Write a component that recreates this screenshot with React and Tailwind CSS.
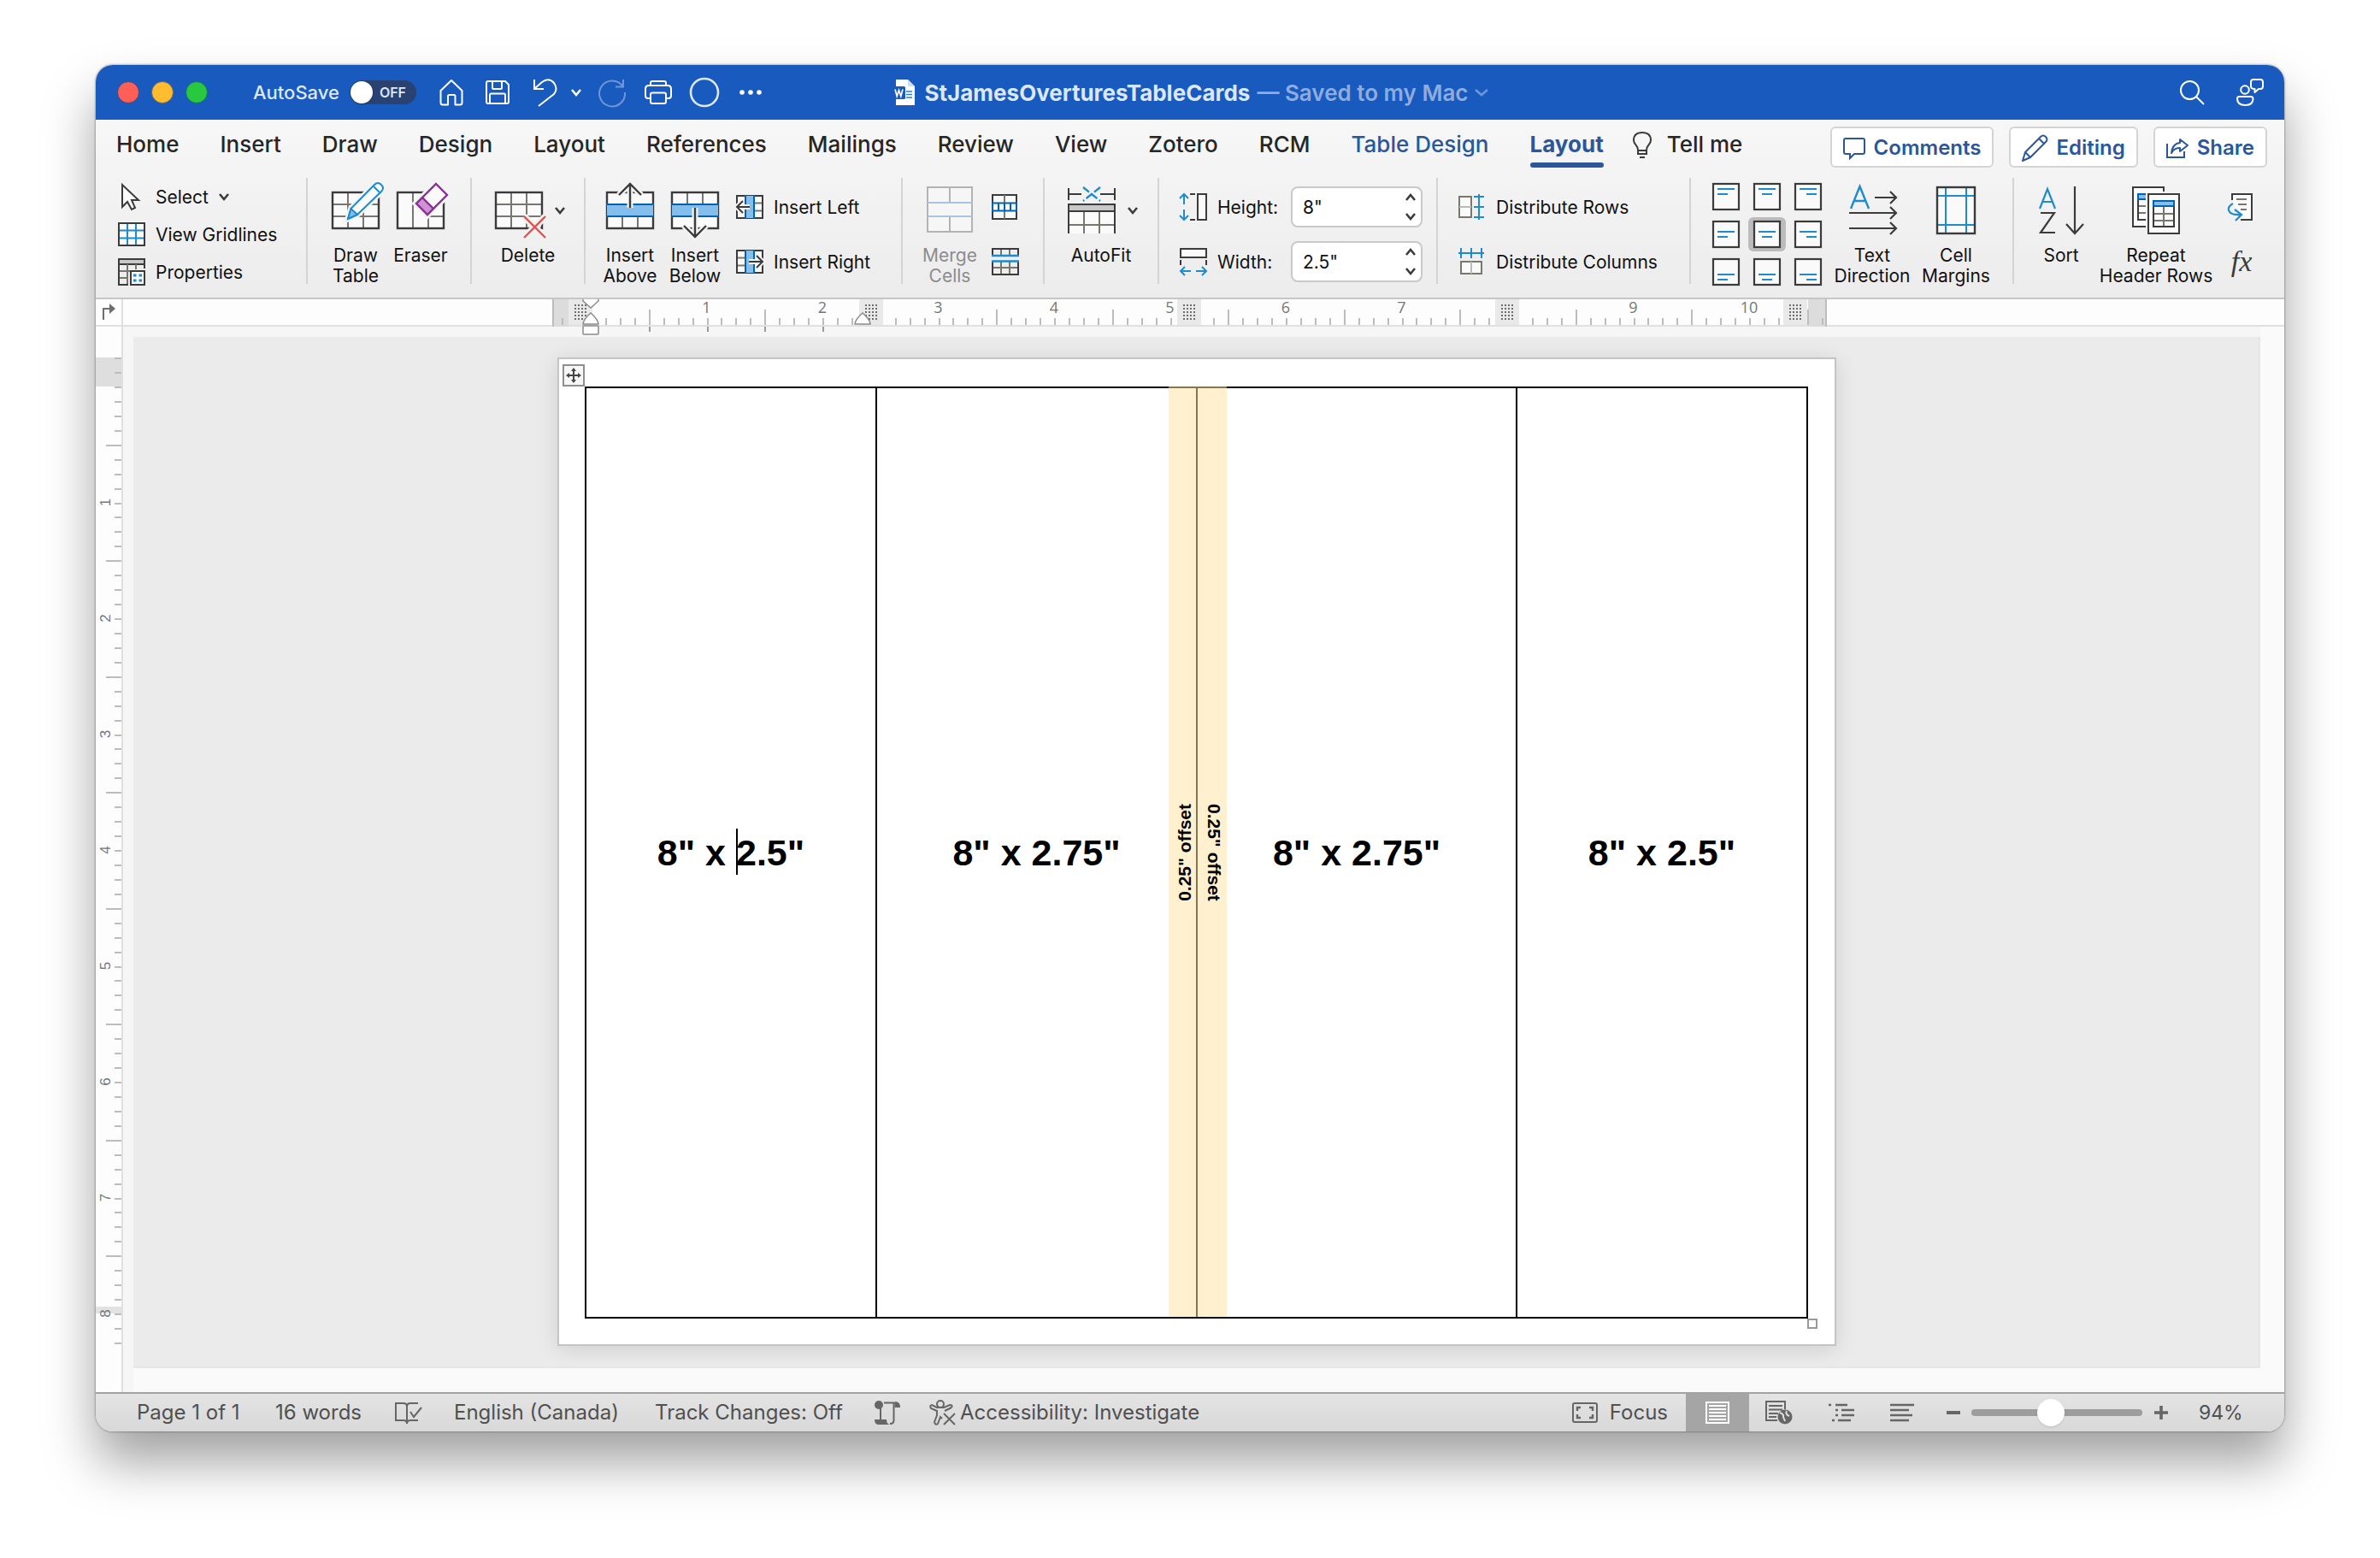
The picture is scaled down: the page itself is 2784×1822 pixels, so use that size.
import React from "react";

const DARK = "#3b3b3b";
const GREY = "#77766f";
const BLUE = "#1e8bcd";
const DEEP = "#0063b1";
const SKY = "#83beec";

function Svg({ w, h, children, className = "", ...rest }) {
  return (
    <svg
      width={w}
      height={h}
      viewBox={`0 0 ${w} ${h}`}
      fill="none"
      stroke={DARK}
      strokeWidth="2"
      aria-hidden="true"
      className={`shrink-0 overflow-visible ${className}`}
      {...rest}
    >
      {children}
    </svg>
  );
}

function Chevron({ color = DARK, up = false, w = 12 }) {
  return (
    <Svg w={w} h={8} stroke={color} strokeWidth="2.6">
      <path d={up ? `M1 7 L${w / 2} 1 L${w - 1} 7` : `M1 1 L${w / 2} 7 L${w - 1} 1`} />
    </Svg>
  );
}

/* ---------- title bar ---------- */

function TitleIcons() {
  const b = "flex items-center justify-center";
  return (
    <>
      <button aria-label="Home" className={`${b} ml-[27px]`}>
        <Svg w={28} h={32} stroke="#fff">
          <path d="M1.5 14 L14 2 L26.500 14 V28 Q26.500 30.500 24 30.500 H18.500 V20.500 Q18.500 19 17 19 H11.500 Q10 19 10 20.500 V30.500 H4 Q1.500 30.500 1.500 28 Z" strokeLinejoin="round" />
        </Svg>
      </button>
      <button aria-label="Save" className={`${b} ml-[26px]`}>
        <Svg w={28} h={28} stroke="#fff">
          <path d="M3 1 H23 L27 5 V25 Q27 27 25 27 H3 Q1 27 1 25 V3 Q1 1 3 1 Z M8 1 V9 Q8 10 9 10 H18 Q19 10 19 9 V1 M5 27 V17 Q5 15.500 6.500 15.500 H21.500 Q23 15.500 23 17 V27" />
        </Svg>
      </button>
      <button aria-label="Undo" className={`${b} ml-7`}>
        <Svg w={28} h={32} stroke="#fff">
          <path d="M1 1 V12 H12 M1.500 11.500 L10 4 Q18 -2 24 5 Q29 12 24 18 L6 32" />
        </Svg>
      </button>
      <button aria-label="Undo options" className={`${b} ml-4`}>
        <Chevron color="#fff" />
      </button>
      <button aria-label="Redo" className={`${b} ml-5`}>
        <Svg w={32} h={32} stroke="#6f97d6">
          <path d="M29 1 V9.500 H20 M28.500 9 A15 15 0 1 0 31 16" />
        </Svg>
      </button>
      <button aria-label="Print" className={`${b} ml-[22px]`}>
        <Svg w={32} h={28} stroke="#fff">
          <path d="M7 6 V3 Q7 1 9 1 H23 Q25 1 25 3 V6 M7 21 H4 Q1 21 1 18 V10 Q1 6 5 6 H27 Q31 6 31 10 V18 Q31 21 28 21 H25" />
          <rect x="7" y="14.500" width="18" height="12.500" rx="2" />
        </Svg>
      </button>
      <button aria-label="Status" className={`${b} ml-5`}>
        <Svg w={36} h={36} stroke="#dfe8f8" strokeWidth="2.600">
          <circle cx="18" cy="18" r="16" />
        </Svg>
      </button>
      <button aria-label="More" className={`${b} ml-[22px]`}>
        <Svg w={28} h={8} fill="#fff" stroke="none">
          <circle cx="4" cy="4" r="2.800" />
          <circle cx="14" cy="4" r="2.800" />
          <circle cx="24" cy="4" r="2.800" />
        </Svg>
      </button>
    </>
  );
}

function TitleBar() {
  return (
    <header className="flex h-16 items-center bg-[#185abd] text-[#dde7f7]">
      <div className="flex flex-1 items-center pl-[25px]">
        <div className="flex gap-3.5">
          <button aria-label="Close" className="size-[26px] rounded-full border border-[#4a4a7c] bg-[#ff5f57]" />
          <button aria-label="Minimise" className="size-[26px] rounded-full border border-[#6d6a6a] bg-[#febc2e]" />
          <button aria-label="Zoom" className="size-[26px] rounded-full border border-[#1a6f6d] bg-[#28c840]" />
        </div>
        <label className="ml-[53px] flex items-center gap-3 text-[22px] font-medium">
          AutoSave
          <input type="checkbox" role="switch" className="peer sr-only" />
          <span className="flex h-7 w-[78px] items-center gap-2 rounded-full bg-[#2a4272] pl-px text-base font-semibold text-[#dde7f7]">
            <span className="size-[26px] rounded-full bg-white shadow-sm" />
            OFF
          </span>
        </label>
        <TitleIcons />
      </div>
      <div className="flex items-center text-[26px] font-bold">
        <Svg w={26} h={32} stroke="none" className="mr-3">
          <path d="M4 1 H18 L26 9 V31 H4 Z" fill="#fff" />
          <path d="M18 1 V9 H26 Z" fill="#cfdcf2" />
          <path d="M16 15 H23 M16 18.500 H23 M16 22 H23" stroke="#2b7cd3" strokeWidth="1.600" />
          <rect x="0" y="9" width="15" height="15" rx="1.500" fill="#185abd" />
          <path d="M3 12.500 L5.200 20.500 L7.500 13.500 L9.800 20.500 L12 12.500" stroke="#fff" strokeWidth="1.700" />
        </Svg>
        <h1 className="whitespace-pre">StJamesOverturesTableCards</h1>
        <button className="flex items-center gap-2 whitespace-nowrap pl-2 font-semibold text-[#8facde]">
          — Saved to my Mac
          <Chevron color="#6f97d6" w={16} />
        </button>
      </div>
      <div className="flex flex-1 items-center justify-end gap-[38px] pr-6">
        <button aria-label="Search">
          <Svg w={28} h={28} stroke="#fff">
            <circle cx="11.500" cy="11.500" r="10.500" />
            <path d="M19 19 L28 28" />
          </Svg>
        </button>
        <button aria-label="Account">
          <Svg w={32} h={32} stroke="#fff">
            <circle cx="10" cy="13" r="4.800" />
            <path d="M3 21 H17 Q19.500 21 19.500 23.500 Q19.500 31 10.500 31 Q1 31 1 23.500 Q1 21 3 21 Z" />
            <path d="M20 1 H28 Q31 1 31 4 V9 Q31 12 28 12 H26 L21.500 16 V12 Q17 12 17 9 V4 Q17 1 20 1 Z" strokeLinejoin="round" />
          </Svg>
        </button>
      </div>
    </header>
  );
}

/* ---------- tabs ---------- */

const TABS = ["Home", "Insert", "Draw", "Design", "Layout", "References", "Mailings", "Review", "View", "Zotero", "RCM"];

function Tab({ children, className = "" }) {
  return (
    <button className={`h-14 whitespace-nowrap pb-3 pt-3.5 leading-[30px] ${className}`}>{children}</button>
  );
}

function ActionButton({ children, icon }) {
  return (
    <button className="flex h-12 items-center gap-2.5 rounded-md border-2 border-[#d4d4d4] bg-white px-[13px] pt-0.5 text-2xl font-semibold text-[#2b579a]">
      {icon}
      {children}
    </button>
  );
}

function TabRow() {
  return (
    <div className="flex h-[68px] items-start justify-between pl-6 pr-5">
      <nav className="flex gap-12 text-[26px] font-medium text-[#262626]">
        {TABS.map((t) => (
          <Tab key={t}>{t}</Tab>
        ))}
        <Tab className="text-[#2b579a]">Table Design</Tab>
        <button className="flex h-14 flex-col gap-1.5 pt-3.5 font-bold leading-[30px] text-[#2b579a]">
          Layout
          <span className="h-1.5 w-full rounded-full bg-[#2b579a]" />
        </button>
        <button className="-ml-3.5 flex h-14 items-start gap-[18px] whitespace-nowrap pt-3.5 leading-[30px]">
          <Svg w={22} h={32}>
            <path d="M6 22 Q6 18 3.500 15.500 Q1 13 1 10 Q1 1 11 1 Q21 1 21 10 Q21 13 18.500 15.500 Q16 18 16 22 Z M6 22 V26 H16 V22 M8 30 H14" />
          </Svg>
          Tell me
        </button>
      </nav>
      <div className="flex gap-[18px] pt-2">
        <ActionButton
          icon={
            <Svg w={26} h={26} stroke="#2b579a">
              <path d="M3 2 H23 Q25 2 25 4 V18 Q25 20 23 20 H13 L8 25 V20 H3 Q1 20 1 18 V4 Q1 2 3 2 Z" />
            </Svg>
          }
        >
          Comments
        </ActionButton>
        <ActionButton
          icon={
            <Svg w={30} h={32} stroke="#2b579a">
              <path d="M1 31 L4 21 L22 3 Q25 0 28 3 Q31 6 28 9 L10 27 Z M20 5 L26.500 11.500 M4 21 L10 27" strokeLinejoin="round" />
            </Svg>
          }
        >
          Editing
        </ActionButton>
        <ActionButton
          icon={
            <Svg w={26} h={26} stroke="#2b579a">
              <path d="M1 8 V24 H21 V17" />
              <path d="M16 3 L25 10 L16 17 V13 Q9 13 6 19 Q7 8 16 7 Z" strokeLinejoin="round" />
            </Svg>
          }
        >
          Share
        </ActionButton>
      </div>
    </div>
  );
}

/* ---------- ribbon icons ---------- */

function TableBase() {
  return (
    <>
      <rect x="5" y="13" width="54" height="42" fill="#fafafa" stroke="none" />
      <path d="M23 13 V55 M41 13 V55 M5 27 H59 M5 41 H59" stroke={GREY} />
      <rect x="5" y="13" width="54" height="42" strokeWidth="2.400" />
    </>
  );
}

function DrawTableIcon() {
  const d = "M23 44 L26.500 32 L54 4 Q58 0 62 4 Q66 8 62 12 L34 39 Z";
  return (
    <Svg w={64} h={68}>
      <TableBase />
      <path d={d} stroke="#f4f4f4" strokeWidth="7" fill="#f4f4f4" />
      <path d={d} stroke={BLUE} fill="#fafafa" strokeLinejoin="round" />
      <path d="M23 44 L26.500 32 L34 39 Z" stroke={BLUE} fill={SKY} />
      <path d="M53 6 L60 13" stroke={BLUE} />
    </Svg>
  );
}

function EraserIcon() {
  return (
    <Svg w={64} h={68}>
      <rect x="5" y="13" width="54" height="42" fill="#fafafa" stroke="none" />
      <path d="M23 13 V55 M41 41 V55 M41 41 H59" stroke={GREY} />
      <rect x="5" y="13" width="54" height="42" strokeWidth="2.400" />
      <path d="M50 3 L63 16 L40 39 L27 26 Z" stroke="#f4f4f4" strokeWidth="8" />
      <path d="M50 3 L63 16 L40 39 L27 26 Z" fill="#fafafa" />
      <path d="M34 19 L47 32 L40 39 L27 26 Z" fill="#ce93d2" />
      <path d="M50 3 L63 16 L40 39 L27 26 Z M34 19 L47 32" stroke="#9331a0" />
    </Svg>
  );
}

function DeleteIcon() {
  return (
    <Svg w={64} h={68}>
      <TableBase />
      <path d="M38 41 L63 66 M63 41 L38 66" stroke="#f2f2f2" strokeWidth="8" />
      <path d="M38 41 L63 66 M63 41 L38 66" stroke="#ee4b48" strokeWidth="2.400" />
    </Svg>
  );
}

function InsertRowIcon({ below = false }) {
  const arrow = below ? "M32 31 V65 M19 52 L32 65 L45 52" : "M32 31 V3 M19 16 L32 3 L45 16";
  return (
    <Svg w={64} h={68}>
      <rect x="5" y="13" width="54" height="42" fill="#fafafa" stroke="none" />
      <path d={below ? "M23 13 V27 M41 13 V27" : "M23 41 V55 M41 41 V55"} stroke={GREY} />
      <rect x="5" y="13" width="54" height="42" strokeWidth="2.400" />
      <rect x="5" y="27" width="54" height="14" fill={SKY} stroke="none" />
      <path d="M4 27 H60 M4 41 H60" stroke={DEEP} />
      <path d={arrow} stroke="#f4f4f4" strokeWidth="7" />
      <path d={arrow} strokeWidth="2.400" />
    </Svg>
  );
}

function InsertColIcon({ right = false }) {
  return (
    <Svg w={32} h={28}>
      <rect x="1" y="1" width="30" height="26" fill="#fafafa" stroke="none" />
      <path d={right ? "M1 9.500 H10 M1 18.500 H10" : "M22 9.500 H31 M22 18.500 H31"} stroke={GREY} />
      <rect x="1" y="1" width="30" height="26" />
      <rect x="10" y="1" width="12" height="26" fill={SKY} stroke="none" />
      <path d="M11 0 V28 M21 0 V28" stroke={DEEP} />
      <path d={right ? "M15 14 H30 M24 7 L31 14 L24 21" : "M16 14 H2 M8 7 L1 14 L8 21"} stroke="#f4f4f4" strokeWidth="6" />
      <path d={right ? "M15 14 H30 M24 7 L31 14 L24 21" : "M16 14 H2 M8 7 L1 14 L8 21"} />
    </Svg>
  );
}

function MergeIcon() {
  return (
    <Svg w={64} h={68} stroke="#b3b3b3">
      <rect x="6" y="7" width="52" height="52" fill="#f6f6f6" />
      <path d="M32 7 V25 M32 41 V59" />
      <path d="M6 25 H58 M6 41 H58" stroke="#a9c3e2" />
    </Svg>
  );
}

function SplitCellsIcon() {
  return (
    <Svg w={32} h={32}>
      <rect x="1" y="2" width="28" height="28" fill="#fafafa" />
      <path d="M15 2 V11 M15 21 V30" stroke={GREY} />
      <path d="M0 11.500 H30 M0 20.500 H30 M1 11 V21 M8 11 V21 M15 11 V21 M22 11 V21 M29 11 V21" stroke={DEEP} />
    </Svg>
  );
}

function SplitTableIcon() {
  return (
    <Svg w={32} h={32}>
      <path d="M11 1 V9 M21 1 V9 M11 16 V31 M21 16 V31 M1 23 H31" stroke={GREY} />
      <path d="M1 9 V1 H31 V9 M1 16 V31 H31 V16" />
      <path d="M0 9 H32 M0 15.500 H32" stroke={BLUE} strokeWidth="2.400" />
    </Svg>
  );
}

function AutoFitIcon() {
  return (
    <Svg w={64} h={68}>
      <path d="M5 8 V22 M59 8 V22 M5 15 H20 M59 15 H42" />
      <path d="M22 7 L42 23 M42 7 L22 23" stroke={BLUE} strokeWidth="2.400" strokeDasharray="9 3" />
      <path d="M5 36 H59 V61 H5 Z" fill="#fafafa" stroke="none" />
      <path d="M23 36 V61 M41 36 V61 M5 51 H59" stroke={GREY} />
      <rect x="5" y="27" width="54" height="8" fill="#c8c8c8" />
      <path d="M5 35 V61 M59 35 V61" />
    </Svg>
  );
}

function HeightIcon() {
  return (
    <Svg w={32} h={32}>
      <rect x="21" y="1" width="10" height="30" fill="#fafafa" />
      <path d="M12 1 H18 M12 31 H18" />
      <path d="M5 2 V13 M5 19 V30 M0 6 L5 1 L10 6 M0 26 L5 31 L10 26" stroke={BLUE} />
    </Svg>
  );
}

function WidthIcon() {
  return (
    <Svg w={32} h={32}>
      <rect x="1" y="1" width="30" height="10" fill="#fafafa" />
      <path d="M1 14 V20 M31 14 V20" />
      <path d="M2 27 H13 M19 27 H30 M6 22 L1 27 L6 32 M26 22 L31 27 L26 32" stroke={BLUE} />
    </Svg>
  );
}

function DistRowsIcon() {
  return (
    <Svg w={32} h={32}>
      <rect x="1" y="4" width="14" height="24" fill="#fafafa" stroke={GREY} />
      <path d="M1 16 H15" stroke="#bbb" />
      <path d="M24 1 V31 M18 4 H30 M18 16 H30 M18 28 H30" stroke={BLUE} />
    </Svg>
  );
}

function DistColsIcon() {
  return (
    <Svg w={32} h={32}>
      <rect x="3" y="16" width="24" height="14" fill="#fafafa" stroke={GREY} />
      <path d="M15 16 V30" stroke="#bbb" />
      <path d="M0 6 H30 M3 0 V12 M15 0 V12 M27 0 V12" stroke={BLUE} />
    </Svg>
  );
}

function TextDirectionIcon() {
  return (
    <Svg w={64} h={68}>
      <path d="M7 32 L17.500 6 L28 32 M10.500 23 H24.500" stroke={BLUE} strokeWidth="2.400" />
      <path d="M35 19 H60 M5 37 H60 M5 55 H60 M53 12 L60 19 L53 26 M53 30 L60 37 L53 44 M53 48 L60 55 L53 62" strokeWidth="2.200" />
    </Svg>
  );
}

function CellMarginsIcon() {
  return (
    <Svg w={64} h={68}>
      <rect x="10" y="7" width="44" height="54" fill="#fafafa" />
      <path d="M20 8 V60 M44 8 V60 M11 17 H53 M11 51 H53" stroke={BLUE} />
      <rect x="10" y="7" width="44" height="54" strokeWidth="2.400" />
    </Svg>
  );
}

function SortIcon() {
  return (
    <Svg w={64} h={68}>
      <path d="M7 32 L16 9 L25 32 M10 24 H22" stroke={BLUE} strokeWidth="2.200" />
      <path d="M8 37 H24 L8 60 H25" strokeWidth="2.200" />
      <path d="M48 6 V61 M38 50 L48 61 L58 50" strokeWidth="2.200" />
    </Svg>
  );
}

function RepeatHeaderIcon() {
  return (
    <Svg w={64} h={68}>
      <path d="M20 53 H5 V7 H41 V12" fill="#fafafa" />
      <path d="M11 22 V45 H20" />
      <path d="M12 29 H20 M12 37 H20" stroke={GREY} />
      <path d="M20 15 H11 V21 H20" fill={SKY} stroke={DEEP} />
      <rect x="23" y="15" width="36" height="46" fill="#fafafa" />
      <path d="M41 30 V53 M29 38 H53 M29 46 H53" stroke={GREY} />
      <rect x="29" y="29" width="24" height="24" />
      <rect x="29" y="23" width="24" height="6" fill={SKY} stroke={DEEP} />
    </Svg>
  );
}

function ConvertIcon() {
  return (
    <Svg w={32} h={32}>
      <path d="M6 8 V1 H29 V31 H16" fill="#fafafa" />
      <path d="M11 7 H23 M13 13 H23 M16 19 H23" stroke={GREY} />
      <path d="M7 12 Q0 16 2.500 21 Q5 26 17 25 M9 19 L17 25 L10 32" stroke="#f4f4f4" strokeWidth="5" />
      <path d="M7 12 Q0 16 2.500 21 Q5 26 17 25 M9 19 L17 25 L10 32" stroke={BLUE} strokeWidth="2.200" />
    </Svg>
  );
}

function AlignIcon({ row, col }) {
  const y = [7, 13, 19][row];
  const x = [6, 10, 14][col];
  return (
    <Svg w={32} h={32}>
      <rect x="1" y="1" width="30" height="30" fill="#fafafa" strokeWidth="2.200" />
      <path d={`M6 ${y} h20 M${x} ${y + 6} h12`} stroke={BLUE} />
    </Svg>
  );
}

/* ---------- ribbon ---------- */

function Group({ className = "", last = false, children }) {
  return (
    <div className={`flex h-[124px] ${last ? "flex-1" : "shrink-0 border-r-2 border-[#d4d4d4]"} ${className}`}>
      {children}
    </div>
  );
}

function BigButton({ icon, label, menu = false, className = "w-[76px]", tone = "" }) {
  return (
    <button className={`flex shrink-0 flex-col items-center pt-1 ${className} ${tone}`}>
      <span className="flex items-center gap-2.5">
        {icon}
        {menu && <Chevron />}
      </span>
      <span className="whitespace-pre pt-[7px] text-center leading-6">{label}</span>
    </button>
  );
}

function SmallButton({ icon, label, menu = false, className = "h-16" }) {
  return (
    <button className={`flex shrink-0 items-center gap-3 whitespace-nowrap text-left ${className}`}>
      {icon}
      <span className="pt-0.5">{label}</span>
      {menu && <Chevron />}
    </button>
  );
}

function SizeField({ id, icon, label, value }) {
  return (
    <div className="flex h-16 shrink-0 items-center">
      {icon}
      <label htmlFor={id} className="w-[98px] pl-3 pt-0.5">
        {label}
      </label>
      <div className="flex h-12 w-[154px] items-center rounded-lg border-2 border-[#c9c9c9] bg-white pr-1.5">
        <input id={id} type="text" defaultValue={value} className="w-full min-w-0 bg-transparent pl-3 pt-0.5 outline-none" />
        <span className="flex flex-col gap-1.5">
          <button aria-label={`Increase ${label}`} className="flex h-4 items-center">
            <Chevron up />
          </button>
          <button aria-label={`Decrease ${label}`} className="flex h-4 items-center">
            <Chevron />
          </button>
        </span>
      </div>
    </div>
  );
}

function Ribbon() {
  return (
    <div className="flex h-[140px] text-[21px] text-[#111]">
      <Group className="w-[248px] flex-col pl-[26px]">
        <SmallButton
          className="h-11"
          label="Select"
          menu
          icon={
            <Svg w={32} h={32}>
              <path d="M5 2 V28 L11 22 L16 31 L20 29 L16 20 H24 Z" fill="#fafafa" />
            </Svg>
          }
        />
        <SmallButton
          className="h-11"
          label="View Gridlines"
          icon={
            <Svg w={32} h={28}>
              <rect x="1" y="1" width="30" height="26" fill="#fafafa" />
              <path d="M11 2 V26 M21 2 V26 M2 9.500 H30 M2 18.500 H30" stroke={BLUE} />
              <rect x="1" y="1" width="30" height="26" />
            </Svg>
          }
        />
        <SmallButton
          className="h-11"
          label="Properties"
          icon={
            <Svg w={32} h={32}>
              <rect x="1" y="1" width="30" height="6" fill="#c8c8c8" />
              <path d="M11 7 V31 M21 7 V13 M1 15 H14 M1 23 H11" stroke={GREY} />
              <path d="M1 7 V31 H12 M31 7 V12" />
              <rect x="15" y="15" width="16" height="16" fill="#fafafa" />
              <path d="M18 20 H21.500 M18 26 H21.500 M24.500 20 H28 M24.500 26 H28" stroke={BLUE} strokeWidth="3" />
            </Svg>
          }
        />
      </Group>
      <Group className="w-48 pl-[18px]">
        <BigButton icon={<DrawTableIcon />} label={"Draw\nTable"} />
        <BigButton icon={<EraserIcon />} label="Eraser" />
      </Group>
      <Group className="w-[133px] justify-center">
        <BigButton icon={<DeleteIcon />} label="Delete" menu className="" />
      </Group>
      <Group className="w-[371px] pl-3.5">
        <BigButton icon={<InsertRowIcon />} label={"Insert\nAbove"} />
        <BigButton icon={<InsertRowIcon below />} label={"Insert\nBelow"} />
        <div className="flex flex-col pl-2.5 pt-0.5">
          <SmallButton icon={<InsertColIcon />} label="Insert Left" />
          <SmallButton icon={<InsertColIcon right />} label="Insert Right" />
        </div>
      </Group>
      <Group className="w-[166px] pl-[17px]">
        <BigButton icon={<MergeIcon />} label={"Merge\nCells"} tone="text-[#8c8c8c]" />
        <div className="flex flex-col pl-[11px] pt-0.5">
          <button aria-label="Split Cells" className="flex h-16 shrink-0 items-center">
            <SplitCellsIcon />
          </button>
          <button aria-label="Split Table" className="flex h-16 shrink-0 items-center">
            <SplitTableIcon />
          </button>
        </div>
      </Group>
      <Group className="w-[134px] justify-center">
        <BigButton icon={<AutoFitIcon />} label="AutoFit" menu className="" />
      </Group>
      <Group className="w-[326px] flex-col pl-6 pt-0.5">
        <SizeField id="row-height" icon={<HeightIcon />} label="Height:" value={'8"'} />
        <SizeField id="col-width" icon={<WidthIcon />} label="Width:" value={'2.5"'} />
      </Group>
      <Group className="w-[296px] flex-col pl-6 pt-0.5">
        <SmallButton icon={<DistRowsIcon />} label="Distribute Rows" />
        <SmallButton icon={<DistColsIcon />} label="Distribute Columns" />
      </Group>
      <Group className="w-[378px] pl-[17px]">
        <div className="grid shrink-0 grid-cols-3 self-start">
          {[0, 1, 2].map((r) =>
            [0, 1, 2].map((c) => (
              <button
                key={`${r}${c}`}
                aria-label={`Align ${["top", "middle", "bottom"][r]} ${["left", "centre", "right"][c]}`}
                className="flex h-11 w-12 items-center justify-center"
              >
                <span
                  className={`flex h-10 w-11 items-center justify-center rounded-md ${r === 1 && c === 1 ? "bg-[#bcbcbc]" : ""}`}
                >
                  <AlignIcon row={r} col={c} />
                </span>
              </button>
            ))
          )}
        </div>
        <BigButton icon={<TextDirectionIcon />} label={"Text\nDirection"} className="ml-0.5 w-[98px]" />
        <BigButton icon={<CellMarginsIcon />} label={"Cell\nMargins"} className="w-[98px]" />
      </Group>
      <Group last className="pl-[9px]">
        <BigButton icon={<SortIcon />} label="Sort" className="w-[92px]" />
        <BigButton icon={<RepeatHeaderIcon />} label={"Repeat\nHeader Rows"} className="w-[130px]" />
        <div className="flex flex-col pl-[18px] pt-0.5">
          <button aria-label="Convert to Text" className="flex h-16 shrink-0 items-center">
            <ConvertIcon />
          </button>
          <button
            aria-label="Formula"
            className="h-16 shrink-0 pl-0.5 font-['Liberation_Serif',serif] text-[34px] italic leading-[60px] text-[#3b3b3b]"
          >
            fx
          </button>
        </div>
      </Group>
    </div>
  );
}

/* ---------- rulers ---------- */

const INCH = 135.5;

function Grip({ x }) {
  return (
    <g>
      <rect x={x} y="0" width="28" height="30" fill="#e9e9e9" />
      {[0, 1, 2, 3, 4].map((r) =>
        [0, 1, 2, 3].map((c) => <rect key={`${r}${c}`} x={x + 7 + c * 4} y={6 + r * 4} width="2" height="2" fill="#6d6d6d" />)
      )}
    </g>
  );
}

function HorizontalRuler() {
  const zero = 45;
  const ticks = [];
  for (let i = -2; i <= 86; i++) {
    if (i % 8 === 0) continue;
    const x = Math.round(zero + (i * INCH) / 8);
    if (x < 8 || x > 1485) continue;
    ticks.push(<rect key={i} x={x} y={i % 4 === 0 ? 12 : 22} width="2" height={i % 4 === 0 ? 18 : 8} fill="#bdbdbd" />);
  }
  const whole = [1, 2, 3, 4, 5, 6, 7, 9, 10];
  return (
    <svg width="1497" height="40" viewBox="0 0 1497 40" shapeRendering="crispEdges" className="shrink-0 overflow-visible" role="img" aria-label="Horizontal ruler">
      <rect x="0" y="0" width="20" height="32" fill="#dcdcdc" />
      <rect x="0" y="0" width="2" height="32" fill="#bdbdbd" />
      <rect x="20" y="0" width="26" height="30" fill="#e9e9e9" />
      <rect x="1469" y="0" width="21" height="32" fill="#dcdcdc" />
      <rect x="1489" y="0" width="2" height="32" fill="#bdbdbd" />
      {ticks}
      {whole.map((n) => (
        <g key={n}>
          <rect x={Math.round(zero + n * INCH)} y="22" width="2" height="8" fill="#bdbdbd" />
          <text
            x={zero + n * INCH}
            y="16"
            textAnchor="middle"
            fill="#777"
            className="font-['Open_Sans',sans-serif] text-[18px]"
          >
            {n}
          </text>
        </g>
      ))}
      {[19, 359, 731, 1103, 1440].map((x) => (
        <Grip key={x} x={x} />
      ))}
      {[1, 2, 3, 4].map((n) => (
        <rect key={n} x={Math.round(zero + (n * INCH) / 2)} y="32" width="2" height="6" fill="#9a9a9a" />
      ))}
      <g fill="#fff" stroke="#8a8a8a" strokeWidth="1.500" shapeRendering="auto">
        <path d="M36 0 V2 L45 10 L54 2 V0" />
        <path d="M45 16 Q54 24 54 29 H36 Q36 24 45 16 Z" />
        <rect x="36" y="31" width="18" height="10" rx="1" />
        <path d="M363 16 Q372 24 372 29 H354 Q354 24 363 16 Z" />
      </g>
    </svg>
  );
}

function VerticalRuler() {
  const zero = 70;
  const ticks = [];
  for (let i = -2; i <= 66; i++) {
    const y = Math.round(zero + (i * INCH) / 8);
    const half = i % 4 === 0 && i % 8 !== 0;
    ticks.push(<rect key={i} x={half ? 12 : 22} y={y} width={half ? 18 : 8} height="2" fill="#bdbdbd" />);
  }
  return (
    <svg width="30" height="1200" viewBox="0 0 30 1200" shapeRendering="crispEdges" className="overflow-visible" role="img" aria-label="Vertical ruler">
      <rect x="0" y="36" width="30" height="34" fill="#dedede" />
      <rect x="0" y="1146" width="30" height="8" fill="#e2e2e2" />
      {ticks}
      {[1, 2, 3, 4, 5, 6, 7, 8].map((n) => (
        <text
          key={n}
          transform={`translate(17 ${zero + n * INCH}) rotate(-90)`}
          textAnchor="middle"
          fill="#777"
          className="font-['Liberation_Sans',sans-serif] text-[17px]"
        >
          {n}
        </text>
      ))}
    </svg>
  );
}

/* ---------- document ---------- */

function Sheet() {
  const cell = "relative border-2 border-black p-0 text-center align-middle";
  return (
    <div className="relative mx-auto h-[1156px] w-[1496px] border-2 border-[#c4c4c4] bg-white px-[30px] py-8 shadow-[0_4px_24px_rgba(0,0,0,0.12)]">
      <span className="absolute left-1 top-1.5 flex size-[26px] items-center justify-center border-2 border-[#8f8f8f] bg-[#f7f7f7]">
        <Svg w={18} h={18} stroke="#444" fill="#444">
          <path d="M9 3 V15 M3 9 H15" fill="none" />
          <path d="M9 0 L12 4 H6 Z M9 18 L12 14 H6 Z M0 9 L4 6 V12 Z M18 9 L14 6 V12 Z" stroke="none" />
        </Svg>
      </span>
      <table className="h-[1090px] w-[1430px] table-fixed border-collapse font-['Liberation_Sans',sans-serif] text-[43px] font-bold leading-none text-black">
        <colgroup>
          <col className="w-[340px]" />
          <col className="w-[375px]" />
          <col className="w-[374px]" />
          <col className="w-[340px]" />
        </colgroup>
        <tbody>
          <tr>
            <td className={cell}>
              8" x{" "}
              <span className="relative">
                <span className="absolute -top-1 left-0 h-[54px] w-0.5 bg-black" />
                2.5"
              </span>
            </td>
            <td className={cell}>
              8" x 2.75"
              <span className="absolute -top-0.5 bottom-0 right-0 flex w-8 items-center justify-center border-t-2 border-[#857650] bg-[#fff1cf] pl-1 text-[21px]">
                <span className="rotate-180 whitespace-nowrap [writing-mode:vertical-rl]">0.25" offset</span>
              </span>
            </td>
            <td className={cell}>
              8" x 2.75"
              <span className="absolute -left-0.5 -top-0.5 bottom-0 flex w-9 items-center justify-center border-l-2 border-t-2 border-[#857650] bg-[#fff1cf] pl-1 text-[21px]">
                <span className="whitespace-nowrap [writing-mode:vertical-rl]">0.25" offset</span>
              </span>
            </td>
            <td className={cell}>8" x 2.5"</td>
          </tr>
        </tbody>
      </table>
      <span className="absolute bottom-[18px] right-5 size-3 border-2 border-[#9a9a9a] bg-white" />
    </div>
  );
}

function Workspace() {
  return (
    <>
      <div className="flex h-8 bg-[#fdfdfd]">
        <div className="flex h-8 w-8 shrink-0 items-center justify-center border-b-2 border-r-2 border-[#e0e0e0]">
          <Svg w={18} h={20} stroke="#6d6d6d">
            <path d="M3 19 V6 H12" />
            <path d="M10 0 L17 6 L10 12 Z" fill="#6d6d6d" stroke="none" />
          </Svg>
        </div>
        <div className="flex h-8 flex-1 justify-center border-b-2 border-[#e0e0e0] pr-7">
          <div className="relative z-10 h-10">
            <HorizontalRuler />
          </div>
        </div>
      </div>
      <div className="flex">
        <div className="w-8 shrink-0 border-r-2 border-[#e0e0e0] bg-[#fdfdfd]">
          <VerticalRuler />
        </div>
        <div className="w-3 shrink-0 bg-[#f6f6f6]" />
        <div className="flex-1 bg-[#fafafa] pb-7 pr-7">
          <div className="h-3 bg-[#f6f6f6]" />
          <main className="border-b-2 border-r-2 border-[#e6e6e6] bg-[#ebebeb] pb-6 pl-0.5 pt-6">
            <Sheet />
          </main>
        </div>
      </div>
    </>
  );
}

/* ---------- status bar ---------- */

function StatusBar() {
  const S = "#666";
  return (
    <footer className="flex h-[46px] items-center border-t-2 border-[#a3a3a3] bg-linear-to-b from-[#e4e4e4] to-[#d8d8d8] text-2xl text-[#505050]">
      <div className="flex flex-1 items-center whitespace-nowrap pl-12">
        <button className="w-[162px] text-left">Page 1 of 1</button>
        <button className="w-[140px] text-left">16 words</button>
        <button aria-label="Proofing" className="w-[69px]">
          <Svg w={32} h={28} stroke={S}>
            <path d="M27 3 H18 Q14 3 14 7 Q14 3 10 3 H1 V23 H10 Q14 23 14 27 Q14 23 18 23 H27 M14 7 V27 M18 13 L22 19 L31 8" />
          </Svg>
        </button>
        <button className="w-[235px] text-left">English (Canada)</button>
        <button className="w-[257px] text-left">Track Changes: Off</button>
        <button aria-label="Record macro" className="w-16">
          <Svg w={32} h={28} stroke={S}>
            <circle cx="5" cy="5" r="5" fill={S} stroke="none" />
            <path d="M11 2.500 H26 M22.500 3 V23 Q22.500 27 18 27 M7 9 V24" />
            <path d="M24 1.500 H26 Q30 2 30 8 H23.500 Z M0 22 H14 Q14 28 19 28 H5 Q0 28 0 22 Z" fill={S} stroke="none" />
          </Svg>
        </button>
        <button className="flex items-center gap-1.5">
          <Svg w={30} h={30} stroke={S}>
            <circle cx="13" cy="5" r="4" />
            <path d="M26 9 Q28 6 24 6 L17 9 H9 L3 6 Q0 7 2 10 L9 13 V18 L6 26 Q7 30 10 28 L13 20 L15 22 M26 9 L18 13" />
            <path d="M17 16 L30 29 M30 16 L17 29" />
          </Svg>
          Accessibility: Investigate
        </button>
      </div>
      <div className="flex h-full items-center">
        <button className="mr-[21px] flex items-center gap-3.5">
          <Svg w={30} h={24} stroke={S}>
            <rect x="1" y="1" width="28" height="22" rx="2" />
            <path d="M6 10 V6 H10 M20 6 H24 V10 M24 14 V18 H20 M10 18 H6 V14" strokeWidth="2.400" />
          </Svg>
          Focus
        </button>
        <button aria-label="Print Layout" className="flex h-full w-[74px] items-center justify-center bg-[#a5a5a5]">
          <Svg w={28} h={26} stroke="#fff">
            <path d="M1 1 H27 V25 H1 Z M4 5 H24 M4 9 H24 M4 13 H24 M4 17 H24 M4 21 H24" />
          </Svg>
        </button>
        <button aria-label="Web Layout" className="flex w-[70px] justify-center">
          <Svg w={32} h={28} stroke={S}>
            <path d="M14 23 H1 V1 H23 V10 M4 6 H20 M4 10.500 H20 M4 15 H15 M4 19 H13" />
            <circle cx="23" cy="19" r="8.500" fill={S} stroke="none" />
            <path d="M17 14 Q22 16 21 19 L23 24 M25 12 Q23 16 28 18" stroke="#dedede" />
          </Svg>
        </button>
        <button aria-label="Outline" className="flex w-[76px] justify-center">
          <Svg w={30} h={22} stroke={S} strokeWidth="2.400">
            <path d="M0 2 H3 M8 2 H22 M8 8 H11 M15 8 H30 M8 14 H11 M15 14 H30 M4 20 H7 M11 20 H26" />
          </Svg>
        </button>
        <button aria-label="Draft" className="flex w-[66px] justify-center">
          <Svg w={28} h={22} stroke={S} strokeWidth="2.400">
            <path d="M0 2 H28 M0 8 H22 M0 14 H26 M0 20 H22" />
          </Svg>
        </button>
        <button aria-label="Zoom out" className="ml-[19px]">
          <Svg w={16} h={16} stroke={S} strokeWidth="4">
            <path d="M0 8 H16" />
          </Svg>
        </button>
        <input
          type="range"
          aria-label="Zoom"
          defaultValue="46"
          className="ml-[13px] mr-3.5 h-2 w-[200px] appearance-none rounded-full bg-[#9d9d9d] [&::-webkit-slider-thumb]:size-8 [&::-webkit-slider-thumb]:appearance-none [&::-webkit-slider-thumb]:rounded-full [&::-webkit-slider-thumb]:bg-white [&::-webkit-slider-thumb]:shadow"
        />
        <button aria-label="Zoom in">
          <Svg w={16} h={16} stroke={S} strokeWidth="3.600">
            <path d="M0 8 H16 M8 0 V16" />
          </Svg>
        </button>
        <button className="w-[136px] pl-9 text-left text-[23px]">94%</button>
      </div>
    </footer>
  );
}

export default function App() {
  return (
    <div className="min-h-screen bg-white px-28 pb-[146px] pt-[76px] font-[Inter,sans-serif]">
      <div className="overflow-hidden rounded-[20px] shadow-[0_36px_60px_rgba(0,0,0,0.37),0_0_2px_1px_rgba(0,0,0,0.25)]">
        <TitleBar />
        <div className="border-b-2 border-[#c6c6c6] bg-linear-to-b from-[#f7f7f7] to-[#ececec]">
          <TabRow />
          <Ribbon />
        </div>
        <Workspace />
        <StatusBar />
      </div>
    </div>
  );
}
